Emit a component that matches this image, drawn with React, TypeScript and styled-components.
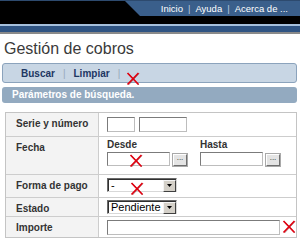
import React from "react";
import styled, { createGlobalStyle } from "styled-components";

const Global = createGlobalStyle`
  html, body { margin: 0; padding: 0; background: #fff; }
  body { width: 300px; height: 239px; overflow: hidden; font-family: "Liberation Sans", Arial, sans-serif; }
  * { box-sizing: border-box; }
  svg { display: block; }
`;

const Page = styled.div`
  width: 300px;
`;

const TopBar = styled.header`
  height: 24px;
  background: #000;
  border-top: 1px solid #2d4a6e;
  display: flex;
  justify-content: flex-end;
  align-items: flex-start;
`;

const Tab = styled.nav`
  width: 175px;
  height: 15px;
  background: #3a5f8b;
  clip-path: polygon(0 0, 100% 0, 100% 100%, 15px 100%);
  display: flex;
  justify-content: flex-end;
  align-items: center;
  padding-right: 12px;
  color: #fff;
  font-size: 9.5px;
`;

const TabSep = styled.span`
  color: #b9cadf;
  margin: 0 5px;
`;

const Stripe = styled.div`
  height: 10px;
  border-top: 2px solid #a6c0dc;
  border-bottom: 2px solid #8a8a8a;
  background: #2f5483;
`;

const Title = styled.h1`
  margin: 6px 0 0 4px;
  font-size: 16px;
  line-height: 18px;
  font-weight: normal;
  color: #3a3a3a;
`;

const Toolbar = styled.div`
  margin: 5px 3px 0 2px;
  height: 20px;
  border: 1px solid #8ba3bc;
  border-radius: 3px;
  background: #c8d6e4;
  display: flex;
  align-items: center;
  padding-left: 18px;
`;

const ToolLink = styled.span`
  font-size: 10px;
  font-weight: bold;
  color: #1d3763;
`;

const ToolSep = styled.span`
  font-size: 10px;
  color: #97a9bb;
  margin: 0 8px;
`;

const SectionBar = styled.div`
  margin: 4px 3px 0 2px;
  height: 16px;
  line-height: 16px;
  border-radius: 3px;
  background: #93aac0;
  color: #fff;
  font-size: 10px;
  font-weight: bold;
  padding-left: 10px;
`;

const Form = styled.div`
  margin: 9px 3px 0 5px;
  border: 1px solid #c4c4c4;
`;

const Row = styled.div<{ $h: number }>`
  display: grid;
  grid-template-columns: 93px 1fr;
  height: ${(p) => p.$h}px;
  & + & {
    border-top: 1px solid #cdcdcd;
  }
`;

const Label = styled.div`
  background: #f3f3f3;
  border-right: 1px solid #cdcdcd;
  padding: 5px 0 0 10px;
  font-size: 10px;
  font-weight: bold;
  color: #333;
`;

const Value = styled.div<{ $top: number }>`
  padding: ${(p) => p.$top}px 0 0 8px;
  display: flex;
  align-items: flex-start;
  gap: 4px;
`;

const TextBox = styled.div<{ $w: number; $h?: number }>`
  width: ${(p) => p.$w}px;
  height: ${(p) => p.$h ?? 15}px;
  background: #fff;
  border: 1px solid;
  border-color: #7b7b7b #bdbdbd #bdbdbd #7b7b7b;
  position: relative;
  flex: none;
`;

const DateGroup = styled.div`
  display: flex;
  flex-direction: column;
  margin-right: 9px;
`;

const SubLabel = styled.div`
  font-size: 10px;
  font-weight: bold;
  color: #333;
  line-height: 12px;
  margin-top: 2px;
  height: 13px;
`;

const DateLine = styled.div`
  display: flex;
  align-items: flex-end;
  gap: 2px;
`;

const DotsButton = styled.div`
  width: 14px;
  height: 12px;
  background: #e4e4e4;
  border: 1px solid;
  border-color: #fff #6f6f6f #6f6f6f #fff;
  box-shadow: 0 0 0 1px #a9a9a9;
  font-size: 8px;
  line-height: 6px;
  text-align: center;
  color: #222;
  margin-left: 1px;
`;

const SelectBox = styled.div`
  width: 70px;
  height: 14px;
  border: 1px solid;
  border-color: #6a6a6a #d8d8d8 #d8d8d8 #6a6a6a;
  box-shadow: inset 1px 1px 0 #303030;
  background: #fff;
  display: flex;
  align-items: center;
  position: relative;
`;

const SelectText = styled.span`
  flex: 1;
  font-size: 11px;
  color: #000;
  padding-left: 3px;
  line-height: 12px;
  white-space: nowrap;
  overflow: hidden;
`;

const SelectButton = styled.span`
  width: 13px;
  height: 12px;
  margin-top: 1px;
  background: #d4d0c8;
  border: 1px solid;
  border-color: #f4f4f4 #404040 #404040 #f4f4f4;
  display: flex;
  align-items: center;
  justify-content: center;
`;

const Overlay = styled.span<{ $left: number; $top: number }>`
  position: absolute;
  left: ${(p) => p.$left}px;
  top: ${(p) => p.$top}px;
`;

const InlineX = styled.span<{ $shift: number }>`
  display: block;
  position: relative;
  top: ${(p) => p.$shift}px;
  margin-left: -2px;
`;

function BrokenX() {
  return (
    <svg width="14" height="14" viewBox="0 0 14 14">
      <path d="M2.5 1.5 L13 13 M13 1.5 L2.5 13" stroke="#5a1a1a" strokeWidth="1" opacity="0.5" />
      <path d="M1.5 1 L12.5 12.5 M12.5 1 L1.5 12.5" stroke="#e00010" strokeWidth="1.7" />
    </svg>
  );
}

function Arrow() {
  return (
    <svg width="5" height="3" viewBox="0 0 5 3">
      <path d="M0 0 H5 L2.5 3 Z" fill="#000" />
    </svg>
  );
}

function Select({ text, mark }: { text: string; mark?: boolean }) {
  return (
    <SelectBox>
      <SelectText>{text}</SelectText>
      <SelectButton>
        <Arrow />
      </SelectButton>
      {mark && (
        <Overlay $left={22} $top={3}>
          <BrokenX />
        </Overlay>
      )}
    </SelectBox>
  );
}

function DateField({ label, mark }: { label: string; mark?: boolean }) {
  return (
    <DateGroup>
      <SubLabel>{label}</SubLabel>
      <DateLine>
        <TextBox $w={63} $h={14}>
          {mark && (
            <Overlay $left={21} $top={1}>
              <BrokenX />
            </Overlay>
          )}
        </TextBox>
        <DotsButton>...</DotsButton>
      </DateLine>
    </DateGroup>
  );
}

export default function App() {
  return (
    <Page>
      <Global />
      <TopBar>
        <Tab>
          <span>Inicio</span>
          <TabSep>|</TabSep>
          <span>Ayuda</span>
          <TabSep>|</TabSep>
          <span>Acerca de ...</span>
        </Tab>
      </TopBar>
      <Stripe />
      <Title>Gestión de cobros</Title>
      <Toolbar>
        <ToolLink>Buscar</ToolLink>
        <ToolSep>|</ToolSep>
        <ToolLink>Limpiar</ToolLink>
        <ToolSep>|</ToolSep>
        <InlineX $shift={6}>
          <BrokenX />
        </InlineX>
      </Toolbar>
      <SectionBar>Parámetros de búsqueda.</SectionBar>
      <Form>
        <Row $h={23}>
          <Label>Serie y número</Label>
          <Value $top={4}>
            <TextBox $w={28} />
            <TextBox $w={48} />
          </Value>
        </Row>
        <Row $h={38}>
          <Label>Fecha</Label>
          <Value $top={0}>
            <DateField label="Desde" mark />
            <DateField label="Hasta" />
          </Value>
        </Row>
        <Row $h={23}>
          <Label>Forma de pago</Label>
          <Value $top={3}>
            <Select text="-" mark />
          </Value>
        </Row>
        <Row $h={19}>
          <Label>Estado</Label>
          <Value $top={2}>
            <Select text="Pendiente" />
          </Value>
        </Row>
        <Row $h={21}>
          <Label>Importe</Label>
          <Value $top={3}>
            <TextBox $w={173} />
            <InlineX $shift={0}>
              <BrokenX />
            </InlineX>
          </Value>
        </Row>
      </Form>
    </Page>
  );
}
